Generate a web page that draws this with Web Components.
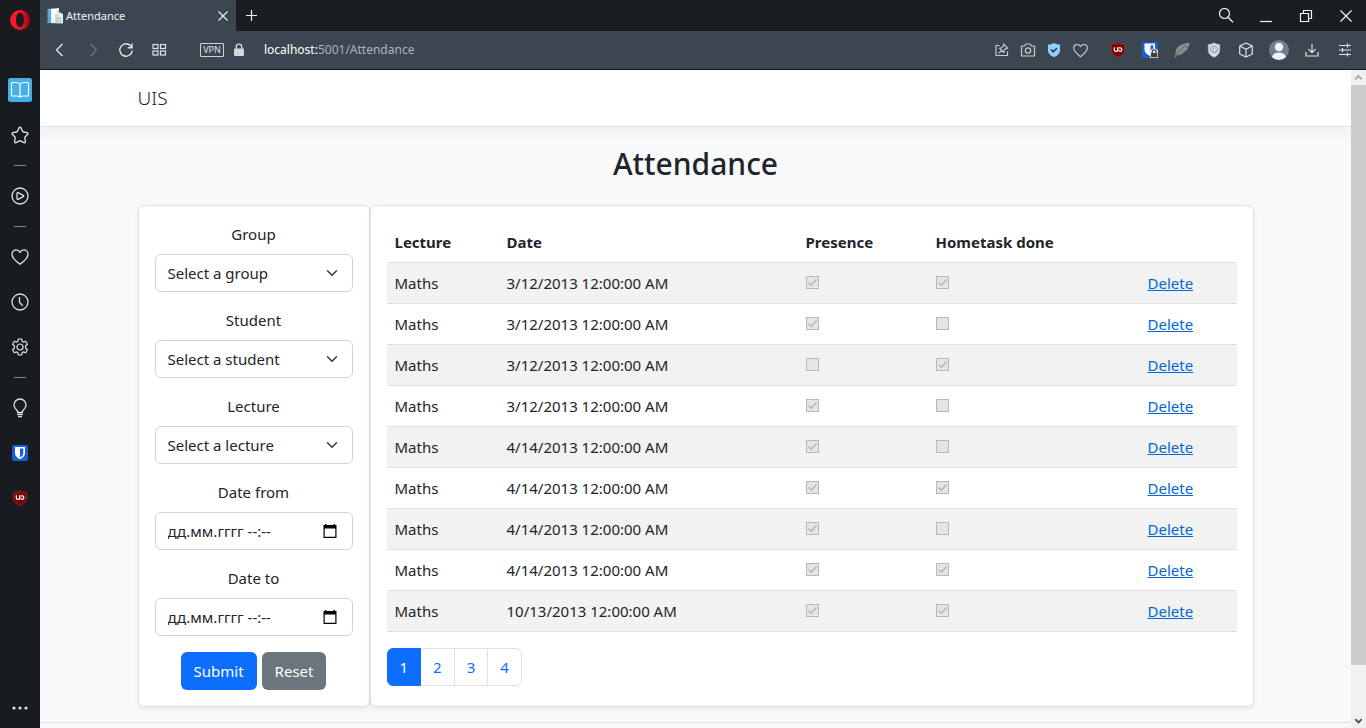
<!DOCTYPE html>
<html lang="en">
<head>
<meta charset="utf-8">
<title>Attendance</title>
<style>
  html, body { margin: 0; height: 100%; }
  body {
    font-family: "Noto Sans", "Open Sans", sans-serif;
    font-size: 15px;
    line-height: 24px;
    color: #212529;
    background: #181b1f;
    overflow: hidden;
  }
</style>
</head>
<body>
<browser-window>
  <side-bar slot="side"></side-bar>
  <tab-strip slot="tabs"></tab-strip>
  <address-bar slot="address"></address-bar>
  <page-view>
    <site-header></site-header>
    <attendance-page>
      <filter-form slot="filter"></filter-form>
      <attendance-table slot="table"></attendance-table>
      <page-nav slot="pages"></page-nav>
    </attendance-page>
    <site-footer></site-footer>
  </page-view>
</browser-window>

<script>
const ICONS = {
  opera: [20, '<defs><linearGradient id="o" x1="0" x2="1"><stop offset="0" stop-color="#ff1b2d"/><stop offset=".5" stop-color="#f31629"/><stop offset="1" stop-color="#a70014"/></linearGradient></defs><path fill="url(#o)" stroke="none" fill-rule="evenodd" d="M10 0a10 10 0 1 0 0 20a10 10 0 1 0 0-20zM10 2.800c2.300 0 3.900 3.100 3.900 7.200s-1.600 7.200-3.900 7.200s-3.900-3.100-3.900-7.200s1.600-7.200 3.900-7.200z"/>'],
  book: [24, '<rect width="24" height="24" rx="2.500" fill="#45b0e6" stroke="none"/><path stroke="#fff" stroke-width="1.200" d="M12 6.200C11 4.900 9.800 4.500 8 4.500H4.500a1 1 0 0 0-1 1V17a1 1 0 0 0 1 1H9c1.400 0 2.200.3 3 1.100c.8-.8 1.600-1.100 3-1.100h4.500a1 1 0 0 0 1-1V5.500a1 1 0 0 0-1-1H16c-1.800 0-3 .4-4 1.700zV19"/>'],
  star: [20, '<path stroke-width="1.300" stroke-linejoin="round" d="M10 2.200c.5 0 .8.300 1 .700l1.700 3.600c.1.300.4.500.7.500l3.700.6c.9.200 1.200 1.100.6 1.700l-2.600 2.700c-.2.200-.3.500-.3.800l.6 3.700c.1.900-.7 1.500-1.500 1.100L10.600 15.900a1.300 1.300 0 0 0-1.200 0L6.100 17.600c-.8.400-1.600-.2-1.500-1.100l.6-3.700c0-.3-.1-.6-.3-.8L2.300 9.300c-.6-.6-.3-1.500.6-1.700L6.600 7c.3 0 .6-.2.700-.5L9 2.900c.2-.4.500-.7 1-.7z"/>'],
  play: [20, '<circle cx="10" cy="10" r="8" stroke-width="1.300"/><path stroke-width="1.300" stroke-linejoin="round" d="M7 7.400c0-.6.600-.9 1.100-.7l5.100 2.600c.6.300.6 1.100 0 1.400l-5.100 2.600c-.5.200-1.100-.1-1.100-.7z"/>'],
  heart: [20, '<path stroke-width="1.300" stroke-linejoin="round" d="M10 17.300C5.500 14 2 10.900 2 7.200C2 4.700 3.900 2.900 6.100 2.900c1.700 0 3.100.9 3.900 2.500c.8-1.600 2.200-2.500 3.900-2.500C16.100 2.900 18 4.700 18 7.200c0 3.700-3.500 6.800-8 10.100z"/>'],
  clock: [20, '<circle cx="10" cy="10" r="8" stroke-width="1.300"/><path stroke-width="1.300" d="M9.500 5v5.300l3.300 3.600"/>'],
  gear: [20, '<circle cx="10" cy="10" r="3" stroke-width="1.200"/><path stroke-width="1.200" stroke-linejoin="round" d="M8.400 2h3.200l.6 2.400l1.200.7l2.300-.8l1.700 2.900l-1.800 1.600v2.400l1.800 1.600l-1.700 2.900l-2.300-.8l-1.200.7l-.6 2.400H8.400l-.6-2.400l-1.200-.7l-2.300.8l-1.700-2.900l1.800-1.600V8.800L2.600 7.200l1.700-2.900l2.300.8l1.200-.7z"/>'],
  bulb: [20, '<path stroke-width="1.300" d="M7.700 14.500c0-1.400-.8-2.400-1.900-3.400A6 6 0 0 1 4 7a6 6 0 0 1 12 0a6 6 0 0 1-1.800 4.100c-1.100 1-1.900 2-1.900 3.400zM7.300 16.500h5.400M8 18.700h4"/>'],
  warden: [16, '<rect width="16" height="16" rx="2" fill="#175ddc" stroke="none"/><path fill="#fff" stroke="none" fill-rule="evenodd" d="M3 2h10v6.200c0 2.700-2.300 4.700-5 6c-2.700-1.300-5-3.300-5-6zM8 3.600v8.800c1.900-1 3.300-2.300 3.300-4.200V3.600z"/>'],
  wardenlock: [16, '<rect width="16" height="16" rx="1" fill="#175ddc" stroke="none"/><path fill="#fff" stroke="none" fill-rule="evenodd" d="M2.500 1.500h10.500v6.200c0 2.700-2.500 4.700-5.200 6c-2.700-1.300-5.300-3.300-5.300-6zM8.500 3.200v8c1.600-1 2.800-2 2.800-3.700V3.200z"/><path fill="#e8e8e8" stroke="none" d="M8.200 10.500q0-4 4-4t3.800 4V16H8.200z"/><path stroke="#3c3c3c" stroke-width="1.200" d="M10.300 11.500V9.800a1.900 1.900 0 0 1 3.800 0v1.700"/><rect x="9" y="11" width="6.300" height="4.300" fill="#3c3c3c" stroke="none"/>'],
  ublock: [16, '<path fill="#800000" stroke="#a03a3a" stroke-width=".6" d="M8 .6c2 1.300 4.200 1.800 6.600 1.800v5.400c0 3.900-2.800 6-6.600 7.700c-3.800-1.700-6.600-3.800-6.600-7.700V2.400C3.800 2.400 6 1.900 8 .600z"/><path stroke="#fff" stroke-width="1.200" d="M4.300 5.300v2.400q0 1.600 1.500 1.600h.9q.9 0 .9-1V5.300M8.700 5.900h1.500q1.600 0 1.600 1.700t-1.600 1.700q-1.500 0-1.500-1.500"/>'],
  dots: [20, '<g stroke="none" fill="#dfe3e6"><circle cx="4" cy="10" r="1.600"/><circle cx="10" cy="10" r="1.600"/><circle cx="16" cy="10" r="1.600"/></g>'],
  favicon: [16, '<path fill="#e9f1f5" stroke="none" d="M1 1l11-1v4l4 2v9.500l-15-.5z"/><path fill="#58a9d8" stroke="none" d="M.5 1.500L4 1v14H.5z"/><path fill="#fff" stroke="none" d="M5 1.500l4.500-.5v4l-2 1v6H5z"/><path fill="#cfdde5" stroke="none" d="M8 6h4v3h3v6H8z"/><path stroke="#9db3c0" stroke-width=".7" d="M9 10.500h5M9 13h5M10.500 3l2 2.500"/>'],
  back: [16, '<path stroke-width="1.400" d="M10.500 2L4.500 8l6 6"/>'],
  forward: [16, '<path stroke="#6b7680" stroke-width="1.300" d="M5.500 2l6 6l-6 6"/>'],
  reload: [16, '<path stroke-width="1.400" d="M13.200 4.600A6.200 6.200 0 1 0 14.200 8.500M14 1.500v4.300H9.700"/>'],
  speed: [16, '<g stroke-width="1.200"><rect x="2" y="2.500" width="5" height="4"/><rect x="9.500" y="2.500" width="5" height="4"/><rect x="2" y="9" width="5" height="4"/><rect x="9.500" y="9" width="5" height="4"/></g>'],
  lock: [16, '<rect x="3" y="6.500" width="10" height="7.500" rx="1" fill="#d3d7da" stroke="none"/><path stroke="#d3d7da" stroke-width="1.400" d="M5.300 7V4.800a2.700 2.700 0 0 1 5.400 0V7"/>'],
  pin: [16, '<path stroke-width="1.100" d="M5.500 3.500H2v10h11.500V9.500"/><path stroke-width="1.100" stroke-linejoin="round" d="M9.200 1.700l5 5M10 2.800L8 5.700l-2.500.5l4.300 4.300l.5-2.500l2.900-2M7.700 8.300l-3 3"/>'],
  camera: [16, '<path stroke-width="1.200" stroke-linejoin="round" d="M1.500 4h3l1.300-2h4.400l1.300 2h3v10h-13z"/><circle cx="8" cy="8.500" r="2.700" stroke-width="1.200"/>'],
  shield: [16, '<path fill="#8fd3fb" stroke="none" d="M8 1c2 1.200 4 1.700 6 1.700V8c0 3.500-2.500 5.600-6 7.200C4.500 13.600 2 11.500 2 8V2.700C4 2.700 6 2.200 8 1z"/><path stroke="#2b3c4b" stroke-width="1.600" d="M5 7.500l2.200 2.300L11 6"/>'],
  feather: [16, '<path fill="#8c8c8c" stroke="none" d="M.5 15.500C2 13 1 9 3 6C5 3 10 1 15.500 1c0 1.500-.3 3-1.300 4.300l-3.200.7h3c-.7 1.800-1.700 2.900-3 3.500l-3.500.6h2.700c-1.500 2.400-4 3-7 3.100L1.500 15.500z"/><path stroke="#555b60" stroke-width=".7" d="M2 14C4 9.500 7 6.500 12.500 3"/>'],
  guard: [16, '<path fill="#e2e5ea" stroke="#9aa1ae" stroke-width=".8" d="M8 .8c2 1.200 4 1.700 5.800 1.700V8c0 3.500-2.300 5.600-5.800 7.300C4.500 13.600 2.200 11.500 2.200 8V2.500C4 2.500 6 2 8 .8z"/><circle cx="8" cy="7.500" r="3.700" stroke="#8b93a8"/><path stroke="#8b93a8" d="M9.500 6.500a1.700 1.700 0 1 0 0 2.200c1 1 2.200 0 1.900-1.500"/>'],
  cube: [16, '<path stroke-width="1.200" stroke-linejoin="round" d="M8 1l6.300 3v8L8 15l-6.300-3V4zM1.700 4L8 7.200L14.300 4M8 7.200V15"/>'],
  avatar: [20, '<circle cx="10" cy="10" r="10" fill="#6f7f91" stroke="none"/><g fill="#edf3f8" stroke="none"><circle cx="10" cy="7" r="4.200"/><path d="M2.800 16.900C4 13.800 6.800 12.500 10 12.500s6 1.300 7.200 4.400A10 10 0 0 1 10 20a10 10 0 0 1-7.200-3.100z"/></g>'],
  download: [16, '<path stroke-width="1.200" d="M2 10v4h12v-4M8 2v8.500M4.500 7.200L8 10.700l3.500-3.500"/>'],
  sliders: [16, '<path stroke-width="1.200" d="M2 3.500h12M2 8h12M2 12.500h12M10.500 1.500v4M5.500 6v4M10.500 10.500v4"/>'],
  search: [16, '<circle cx="6.500" cy="5.500" r="5" stroke-width="1.200"/><path stroke-width="1.300" d="M10 9.200l5 5"/>'],
  minimize: [16, '<path stroke-width="1.200" d="M2 13.500h12"/>'],
  restore: [16, '<path stroke-width="1.200" d="M2.500 5.500h8v8h-8zM5.500 5V2.500h8v8H11"/>'],
  close: [16, '<path stroke-width="1.200" d="M2.500 2.500l11 11M13.500 2.500l-11 11"/>'],
  cross: [12, '<path stroke-width="1.100" d="M1.500 1.500l9 9M10.500 1.500l-9 9"/>'],
  plus: [12, '<path stroke-width="1.200" d="M5.500 0v11M0 5.500h11"/>'],
  up: [16, '<path stroke="#a8a8a8" stroke-width="2" d="M4.500 10L8 6.500l3.500 3.500"/>'],
  down: [16, '<path stroke="#505050" stroke-width="2" d="M4.500 6.500L8 10l3.500-3.500"/>'],
  chevron: [16, '<path stroke="#343a40" stroke-width="2" stroke-linecap="round" stroke-linejoin="round" d="M2 5l6 6l6-6"/>'],
  calendar: [16, '<path fill="#000" stroke="none" fill-rule="evenodd" d="M3 1h1.500v1h7V1H13v1h1.500v13h-13V2H3zM2.700 5.500v8.300h10.600V5.500z"/>']
};

class Base extends HTMLElement {
  connectedCallback() {
    if (this.shadowRoot) return;
    this.attachShadow({ mode: 'open' });
    this.shadowRoot.innerHTML = `<style>
      :host, * { box-sizing: border-box; }
      button { font: inherit; color: inherit; border: 0; padding: 0; background: none; cursor: pointer; }
      ${this.css()}</style>${this.html()}`;
  }
  css() { return ':host { display: block; }'; }
  html() { return '<slot></slot>'; }
}
const iconButton = (name, label) =>
  `<button type="button" aria-label="${label}"><ui-icon name="${name}"></ui-icon></button>`;

customElements.define('ui-icon', class extends Base {
  css() { return ':host { display: inline-flex; flex: none; } svg { display: block; }'; }
  html() {
    const [size, art] = ICONS[this.getAttribute('name')];
    const box = this.getAttribute('size') || size;
    return `<svg width="${box}" height="${box}" viewBox="0 0 ${size} ${size}" fill="none" stroke="currentColor" aria-hidden="true">${art}</svg>`;
  }
});

customElements.define('browser-window', class extends Base {
  css() { return `
    :host { display: grid; grid-template: auto auto minmax(0, 1fr) / 40px minmax(0, 1fr); height: 100vh; }
    slot[name=side] { display: block; grid-row: 1 / 4; }`; }
  html() { return `<slot name="side"></slot><slot name="tabs"></slot><slot name="address"></slot><slot></slot>`; }
});

customElements.define('side-bar', class extends Base {
  css() { return `
    :host { display: block; height: 100%; background: #181b1f; color: #dfe3e6; }
    nav { display: flex; flex-direction: column; align-items: center; height: 100%; }
    button { display: flex; align-items: center; justify-content: center; width: 40px; height: 45px; }
    .logo { height: 40px; margin-bottom: 27px; }
    .more { height: 40px; margin-top: auto; }
    hr { width: 12px; height: 1px; margin: 8px 0 7px; border: 0; background: #7d8f9b; }`; }
  html() { return `<nav aria-label="Browser sidebar">
    <button type="button" class="logo" aria-label="Opera menu"><ui-icon name="opera"></ui-icon></button>
    ${iconButton('book', 'Reading list')}${iconButton('star', 'Bookmarks')}<hr>
    ${iconButton('play', 'Player')}<hr>
    ${iconButton('heart', 'Pinboards')}${iconButton('clock', 'History')}${iconButton('gear', 'Settings')}<hr>
    ${iconButton('bulb', 'Tips')}${iconButton('warden', 'Bitwarden')}${iconButton('ublock', 'uBlock')}
    <button type="button" class="more" aria-label="More"><ui-icon name="dots"></ui-icon></button></nav>`; }
});

customElements.define('tab-strip', class extends Base {
  css() { return `
    :host { display: flex; height: 31px; background: #1a1e21; color: #f1f3f4; font-size: 11px; line-height: 16px; }
    .tab { display: flex; align-items: center; gap: 3px; width: 196px; padding: 0 7px; background: #3b4650; }
    .tab span { flex: 1; }
    button { display: flex; align-items: center; justify-content: center; }
    .new { width: 31px; }
    .controls { display: flex; margin-left: auto; }
    .controls button { width: 40px; }`; }
  html() { return `<div class="tab"><ui-icon name="favicon"></ui-icon><span>Attendance</span>${iconButton('cross', 'Close tab')}</div>
    <button type="button" class="new" aria-label="New tab"><ui-icon name="plus"></ui-icon></button>
    <div class="controls">${iconButton('search', 'Search tabs')}${iconButton('minimize', 'Minimize')}${iconButton('restore', 'Restore')}${iconButton('close', 'Close')}</div>`; }
});

customElements.define('address-bar', class extends Base {
  css() { return `
    :host { display: flex; align-items: center; height: 39px; padding: 0 5px 0 3px; background: #3b4650; color: #dfe3e6; border-bottom: 1px solid #14181b; font-size: 12px; line-height: 16px; }
    div { display: flex; }
    button { display: flex; align-items: center; justify-content: center; height: 32px; }
    .nav button { width: 33px; }
    .vpn { width: 24px; height: 14px; margin-left: 25px; border: 1px solid #cfd4d8; border-radius: 1px; font-size: 9px; line-height: 12px; }
    .lock { width: 30px; }
    .url { flex: 1; margin-left: 10px; color: #a9b4bd; white-space: nowrap; }
    .url b { font-weight: 400; color: #fff; }
    .page { margin-right: 9px; color: #c9ced2; }
    .page button { width: 26px; }
    .ext button { width: 32px; }
    .menu button { width: 33px; }`; }
  html() { return `<div class="nav">${iconButton('back', 'Back')}${iconButton('forward', 'Forward')}${iconButton('reload', 'Reload')}${iconButton('speed', 'Speed dial')}</div>
    <button type="button" class="vpn">VPN</button>
    <button type="button" class="lock" aria-label="Site information"><ui-icon name="lock"></ui-icon></button>
    <span class="url"><b>localhost:</b>5001/Attendance</span>
    <div class="page">${iconButton('pin', 'Edit and share')}${iconButton('camera', 'Snapshot')}${iconButton('shield', 'Protection')}<button type="button" aria-label="Save"><ui-icon name="heart" size="17"></ui-icon></button></div>
    <div class="ext">${iconButton('ublock', 'uBlock')}${iconButton('wardenlock', 'Bitwarden')}${iconButton('feather', 'Feather')}${iconButton('guard', 'Guard')}${iconButton('cube', 'Extensions')}</div>
    <div class="menu">${iconButton('avatar', 'Profile')}${iconButton('download', 'Downloads')}${iconButton('sliders', 'Easy setup')}</div>`; }
});

customElements.define('page-view', class extends Base {
  css() { return `
    :host { display: flex; min-height: 0; background: #f8f9fa; }
    .page { flex: 1; min-width: 0; overflow-y: auto; scrollbar-width: none; }
    .bar { display: flex; flex-direction: column; width: 15px; background: #f0f0f0; }
    .bar ui-icon { height: 15px; width: 15px; }
    .thumb { flex: 12; background: #cdcdcd; }
    .rest { flex: 1; }`; }
  html() { return `<div class="page"><slot></slot></div>
    <div class="bar"><ui-icon name="up" size="15"></ui-icon><div class="thumb"></div><div class="rest"></div><ui-icon name="down" size="15"></ui-icon></div>`; }
});

customElements.define('site-header', class extends Base {
  css() { return `
    :host { display: block; background: #fff; border-bottom: 1px solid #dee2e6; box-shadow: 0 4px 12px rgba(0, 0, 0, .05); }
    nav { display: flex; max-width: 1116px; margin: 0 auto; padding: 16px 0; }
    a { color: #212529; text-decoration: none; font-size: 19px; font-weight: 300; }`; }
  html() { return `<nav><a href="#">UIS</a></nav>`; }
});

customElements.define('attendance-page', class extends Base {
  css() { return `
    :host { display: block; max-width: 1116px; margin: 0 auto; padding: 18px 0 15px; }
    h1 { margin: 0 0 22px; text-align: center; font-size: 30px; line-height: 38px; font-weight: 500; }
    .cards { display: grid; grid-template-columns: 232px minmax(0, 1fr); }
    section { padding: 16px; background: #fff; border: 1px solid #dee2e6; border-radius: 6px; box-shadow: 0 2px 4px rgba(0, 0, 0, .075); }`; }
  html() { return `<h1>Attendance</h1><div class="cards">
    <section><slot name="filter"></slot></section>
    <section><slot name="table"></slot><slot name="pages"></slot></section></div>`; }
});

const FIELD = `
  :host { display: block; margin-bottom: 16px; text-align: center; }
  label { display: block; margin-bottom: 8px; }
  .control { position: relative; }
  select, input { display: block; width: 100%; height: 38px; padding: 6px 12px; border: 1px solid #ced4da; border-radius: 6px; background: #fff; color: #212529; font: inherit; appearance: none; }
  input::placeholder { color: #212529; opacity: 1; }`;

customElements.define('select-field', class extends Base {
  css() { return FIELD + `
    ui-icon { position: absolute; right: 15px; top: 13px; pointer-events: none; }`; }
  html() { return `<label for="f">${this.getAttribute('label')}</label>
    <div class="control"><select id="f"><option>${this.getAttribute('prompt')}</option></select><ui-icon name="chevron" size="12"></ui-icon></div>`; }
});

customElements.define('date-field', class extends Base {
  css() { return FIELD + `
    button { position: absolute; right: 15px; top: 11px; display: flex; }`; }
  html() { return `<label for="f">${this.getAttribute('label')}</label>
    <div class="control"><input id="f" type="text" placeholder="дд.мм.гггг --:--">${iconButton('calendar', 'Open calendar')}</div>`; }
});

customElements.define('filter-form', class extends Base {
  css() { return `
    :host { display: block; }
    .actions { display: flex; justify-content: center; gap: 5px; }
    .actions button { padding: 7px 13px; border-radius: 6px; background: #6c757d; color: #fff; }
    .actions .primary { background: #0d6efd; }`; }
  html() { return `<form onsubmit="return false">
    <select-field label="Group" prompt="Select a group"></select-field>
    <select-field label="Student" prompt="Select a student"></select-field>
    <select-field label="Lecture" prompt="Select a lecture"></select-field>
    <date-field label="Date from"></date-field>
    <date-field label="Date to"></date-field>
    <div class="actions"><button class="primary" type="submit">Submit</button><button type="reset">Reset</button></div></form>`; }
});

const RECORDS = [
  ['3/12/2013', 1, 1], ['3/12/2013', 1, 0], ['3/12/2013', 0, 1], ['3/12/2013', 1, 0],
  ['4/14/2013', 1, 0], ['4/14/2013', 1, 1], ['4/14/2013', 1, 0], ['4/14/2013', 1, 1],
  ['10/13/2013', 1, 1]
];
customElements.define('attendance-table', class extends Base {
  css() { return `
    :host { display: block; margin-bottom: 16px; }
    table { width: 100%; table-layout: fixed; border-collapse: separate; border-spacing: 0; }
    th, td { padding: 8px; text-align: left; vertical-align: top; border-bottom: 1px solid #dee2e6; }
    th { font-weight: 700; }
    tbody tr:nth-child(odd) { background: #f2f2f2; }
    .lecture { width: 112px; } .presence { width: 130px; } .task { width: 212px; } .action { width: 97px; }
    input { appearance: none; display: block; width: 13px; height: 13px; margin: 5px 0 6px; border: 1px solid #b8b8b8; background: #e5e5e5; }
    input:checked { background-image: url("data:image/svg+xml,%3Csvg xmlns='http://www.w3.org/2000/svg' viewBox='0 0 11 11'%3E%3Cpath d='M1.500 5.500l2.800 2.700l5.200-5.700' fill='none' stroke='%23b4b4b4' stroke-width='1.400'/%3E%3C/svg%3E"); }
    a { color: #0366d6; }`; }
  html() {
    const box = (on, label) => `<input type="checkbox" disabled aria-label="${label}"${on ? ' checked' : ''}>`;
    return `<table><thead><tr><th class="lecture">Lecture</th><th>Date</th><th class="presence">Presence</th><th class="task">Hometask done</th><th class="action"></th></tr></thead><tbody>${
      RECORDS.map(([day, here, done]) => `<tr><td>Maths</td><td>${day} 12:00:00 AM</td><td>${box(here, 'Presence')}</td><td>${box(done, 'Hometask done')}</td><td><a href="#">Delete</a></td></tr>`).join('')
    }</tbody></table>`; }
});

customElements.define('page-nav', class extends Base {
  css() { return `
    :host { display: block; }
    nav { display: flex; }
    a { padding: 6px 12px; border: 1px solid #dee2e6; background: #fff; color: #0d6efd; text-decoration: none; }
    a + a { margin-left: -1px; }
    a:first-child { border-radius: 6px 0 0 6px; }
    a:last-child { border-radius: 0 6px 6px 0; }
    a[aria-current] { position: relative; background: #0d6efd; border-color: #0d6efd; color: #fff; }`; }
  html() { return `<nav aria-label="Pages"><a href="#" aria-current="page">1</a><a href="#">2</a><a href="#">3</a><a href="#">4</a></nav>`; }
});

customElements.define('site-footer', class extends Base {
  css() { return ':host { display: block; height: 60px; border-top: 1px solid #dee2e6; }'; }
  html() { return ''; }
});
</script>
</body>
</html>
